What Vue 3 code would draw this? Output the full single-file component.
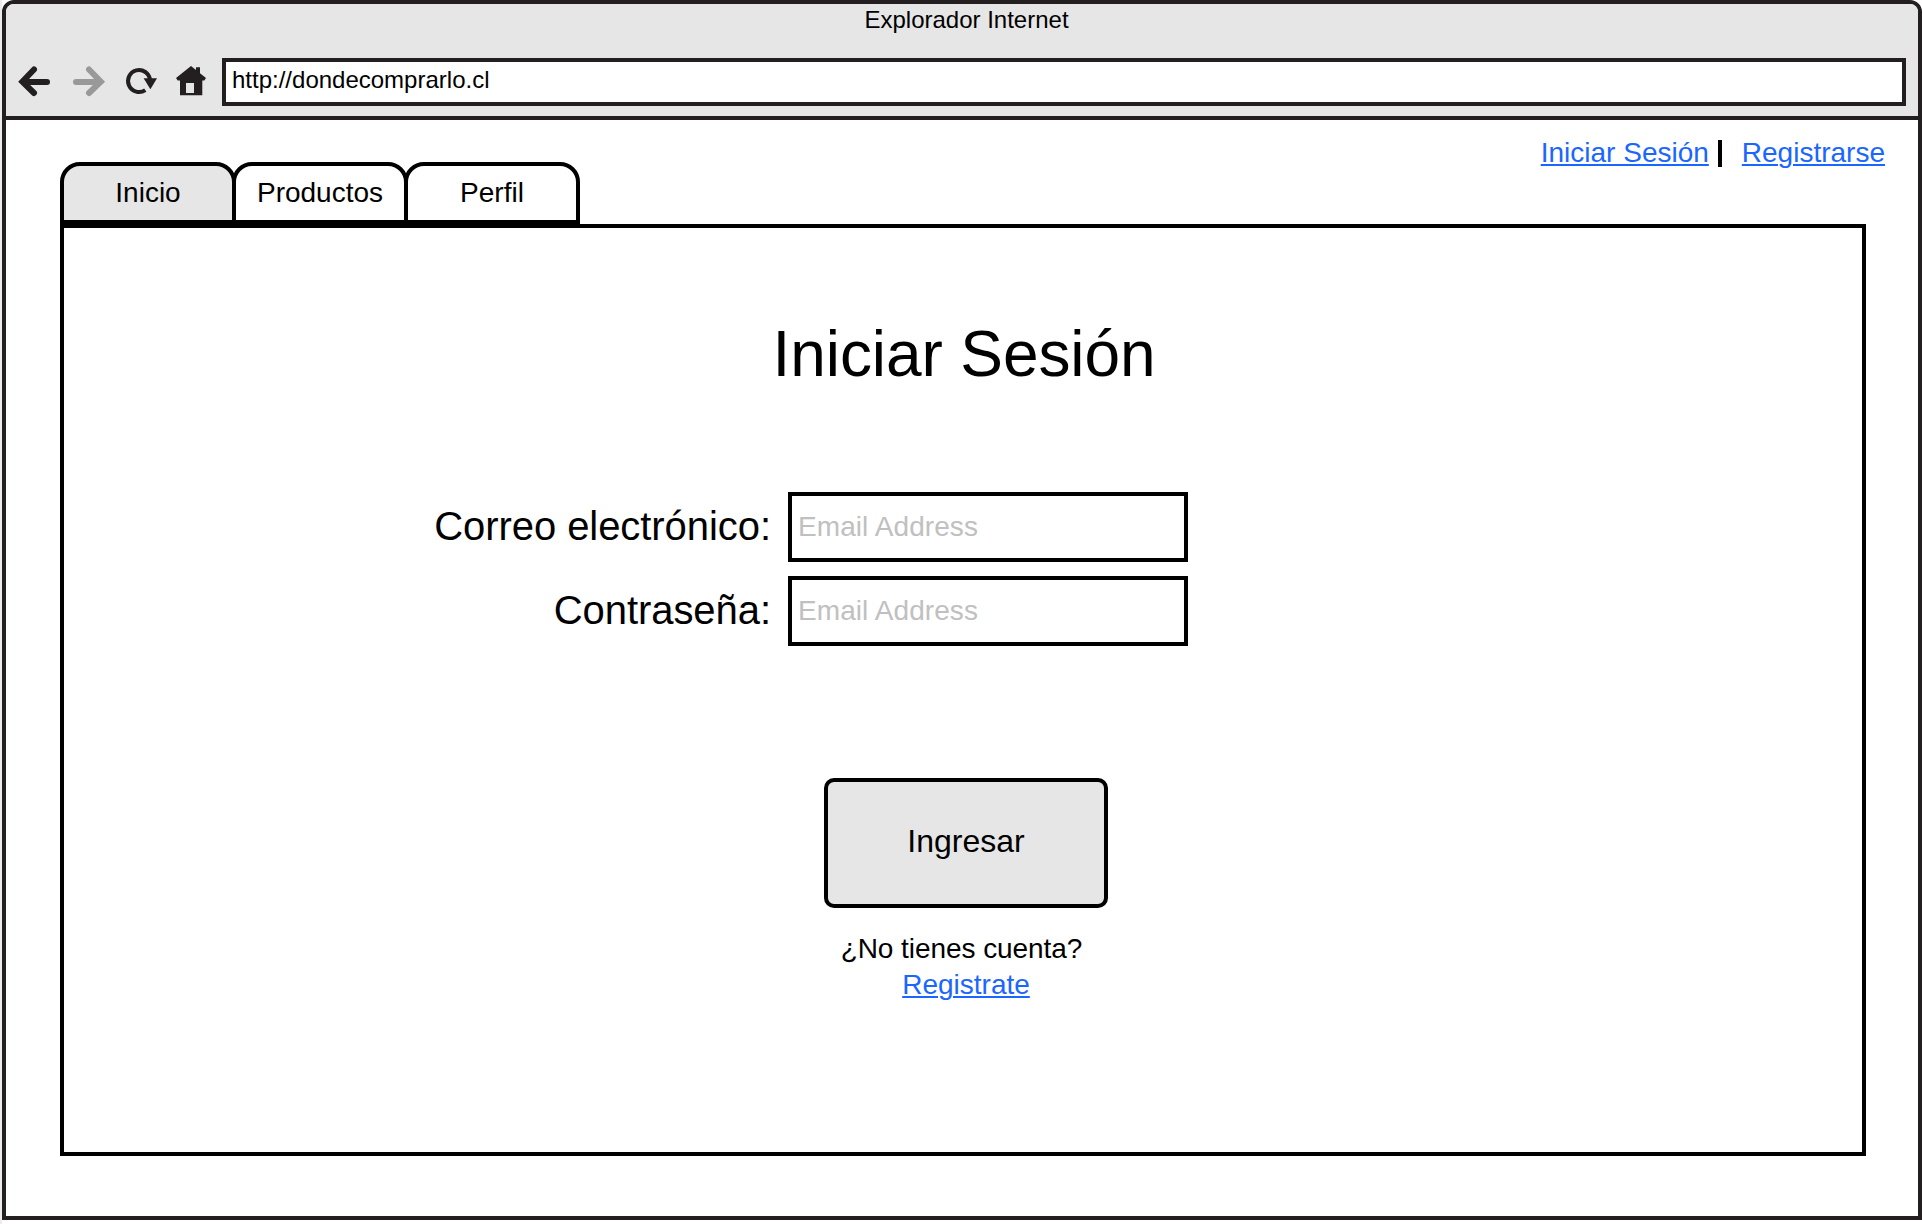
<script setup>
import { ref } from 'vue'

const url = ref('http://dondecomprarlo.cl')
const tabs = ['Inicio', 'Productos', 'Perfil']
const active = ref('Inicio')
const fields = [
  { label: 'Correo electrónico:', type: 'text', placeholder: 'Email Address' },
  { label: 'Contraseña:', type: 'password', placeholder: 'Email Address' },
]
</script>

<template>
  <div class="desktop">
    <div class="window">
      <header class="chrome">
        <div class="title">Explorador Internet</div>
        <div class="toolbar">
          <svg class="icon back" viewBox="16 64 36 36" width="36" height="36">
            <g fill="none" stroke="#231f20" stroke-width="6" stroke-linecap="round">
              <path d="M34 69.5 22.4 81.6 34 93" />
              <path d="M24 82H47" />
            </g>
          </svg>
          <svg class="icon forward" viewBox="71 64 36 36" width="36" height="36">
            <g fill="none" stroke="#999" stroke-width="6" stroke-linecap="round">
              <path d="M89 69.5 100.8 81.6 89 93" />
              <path d="M99 82H76" />
            </g>
          </svg>
          <svg class="icon reload" viewBox="124 64 36 36" width="36" height="36">
            <path d="M145.3 90.1A11 11 0 1 1 150 80" fill="none" stroke="#231f20" stroke-width="4" />
            <path d="M143.6 78.3H157L150.4 89.2Z" fill="#231f20" />
          </svg>
          <svg class="icon home" viewBox="174 64 36 36" width="36" height="36">
            <path
              d="M191 66 196 70V67.3H200V73.2L206 78 204.3 80.4H202.3V95.3H180V80.4H177.7L176 78ZM186 83V93H194V83Z"
              fill="#231f20"
              fill-rule="evenodd"
            />
          </svg>
          <input v-model="url" class="address" type="text" />
        </div>
      </header>

      <main class="page">
        <div class="top">
          <nav class="tabs">
            <button
              v-for="tab in tabs"
              :key="tab"
              class="tab"
              :class="{ active: tab === active }"
              @click="active = tab"
            >
              {{ tab }}
            </button>
          </nav>
          <div class="session">
            <a href="#">Iniciar Sesión</a>
            <span class="divider"></span>
            <a href="#">Registrarse</a>
          </div>
        </div>

        <section class="panel">
          <h1>Iniciar Sesión</h1>
          <form class="form" @submit.prevent>
            <label v-for="field in fields" :key="field.label" class="row">
              <span class="label">{{ field.label }}</span>
              <input class="field" :type="field.type" :placeholder="field.placeholder" />
            </label>
            <button class="submit" type="submit">Ingresar</button>
          </form>
          <p class="question">¿No tienes cuenta?</p>
          <a class="signup" href="#">Registrate</a>
        </section>
      </main>
    </div>
  </div>
</template>

<style>
html {
  background: #fff;
}
</style>

<style scoped>
.desktop,
.desktop * {
  box-sizing: border-box;
  font-family: "Liberation Sans", Arial, sans-serif;
}
.desktop {
  height: 1224px;
  border-left: 2px solid #ececec;
  background: #fff;
}
.window {
  display: flex;
  flex-direction: column;
  width: 1920px;
  height: 1220px;
  border: 4px solid #231f20;
  border-radius: 12px 12px 0 0;
  background: #fff;
  color: #000;
  overflow: hidden;
}
.chrome {
  height: 116px;
  flex: none;
  padding-top: 2px;
  background: #e6e6e6;
  border-bottom: 4px solid #231f20;
}
.title {
  font-size: 24px;
  line-height: 27px;
  text-align: center;
  padding-left: 9px;
}
.toolbar {
  display: flex;
  align-items: flex-start;
  margin-top: 25px;
  padding: 0 12px 0 10px;
}
.icon {
  flex: none;
  margin-top: 6px;
}
.forward {
  margin-left: 19px;
}
.reload {
  margin-left: 17px;
}
.home {
  margin-left: 14px;
}
.address {
  flex: 1;
  height: 48px;
  margin-left: 12px;
  padding: 0 6px 5px;
  border: 4px solid #231f20;
  border-radius: 0;
  background: #fff;
  font-size: 24px;
  line-height: 27px;
  outline: none;
}
.page {
  flex: 1;
  padding: 0 52px 0 54px;
}
.top {
  display: flex;
  justify-content: space-between;
  height: 104px;
}
.tabs {
  display: flex;
  padding-top: 42px;
}
.tab {
  width: 176px;
  height: 62px;
  padding: 0 0 1px;
  border: 4px solid #000;
  border-radius: 20px 20px 0 0;
  background: #fff;
  font-size: 28px;
  line-height: 31px;
  color: #000;
}
.tab + .tab {
  margin-left: -4px;
}
.tab.active {
  background: #e6e6e6;
}
.session {
  display: flex;
  align-items: flex-start;
  margin-right: -19px;
  padding-top: 17px;
  font-size: 28px;
  line-height: 31px;
}
.divider {
  width: 4px;
  height: 27px;
  margin: 3px 20px 0 9px;
  background: #000;
}
a {
  color: #1a66ff;
  text-decoration: underline;
  text-decoration-thickness: 2px;
  text-underline-offset: 2px;
  text-decoration-skip-ink: auto;
}
.panel {
  display: flex;
  flex-direction: column;
  align-items: center;
  height: 932px;
  border: 4px solid #000;
}
h1 {
  margin: 90px 0 0 2px;
  font-size: 64px;
  font-weight: 400;
  line-height: 72px;
  letter-spacing: -0.1px;
}
.form {
  display: flex;
  flex-direction: column;
  align-self: stretch;
  margin-top: 102px;
}
.row {
  display: flex;
  align-items: flex-start;
  margin-bottom: 14px;
}
.label {
  width: 707px;
  padding-top: 12px;
  font-size: 40px;
  line-height: 44px;
  letter-spacing: -0.06px;
  text-align: right;
}
.field {
  width: 400px;
  height: 70px;
  margin-left: 17px;
  padding: 0 6px 1px;
  border: 4px solid #000;
  border-radius: 0;
  background: #fff;
  font-size: 28px;
  line-height: 31px;
  letter-spacing: 0.08px;
  outline: none;
}
.field::placeholder {
  color: #c0c0c0;
  opacity: 1;
}
.submit {
  width: 284px;
  height: 130px;
  margin: 118px 0 0 760px;
  padding: 0 0 4px;
  border: 4px solid #000;
  border-radius: 10px;
  background: #e6e6e6;
  font-size: 32px;
  line-height: 36px;
  color: #000;
}
.question {
  margin: 25px 3px 0 0;
  font-size: 28px;
  line-height: 31px;
  letter-spacing: -0.06px;
}
.signup {
  margin: 5px 0 0 6px;
  font-size: 28px;
  line-height: 31px;
}
</style>
